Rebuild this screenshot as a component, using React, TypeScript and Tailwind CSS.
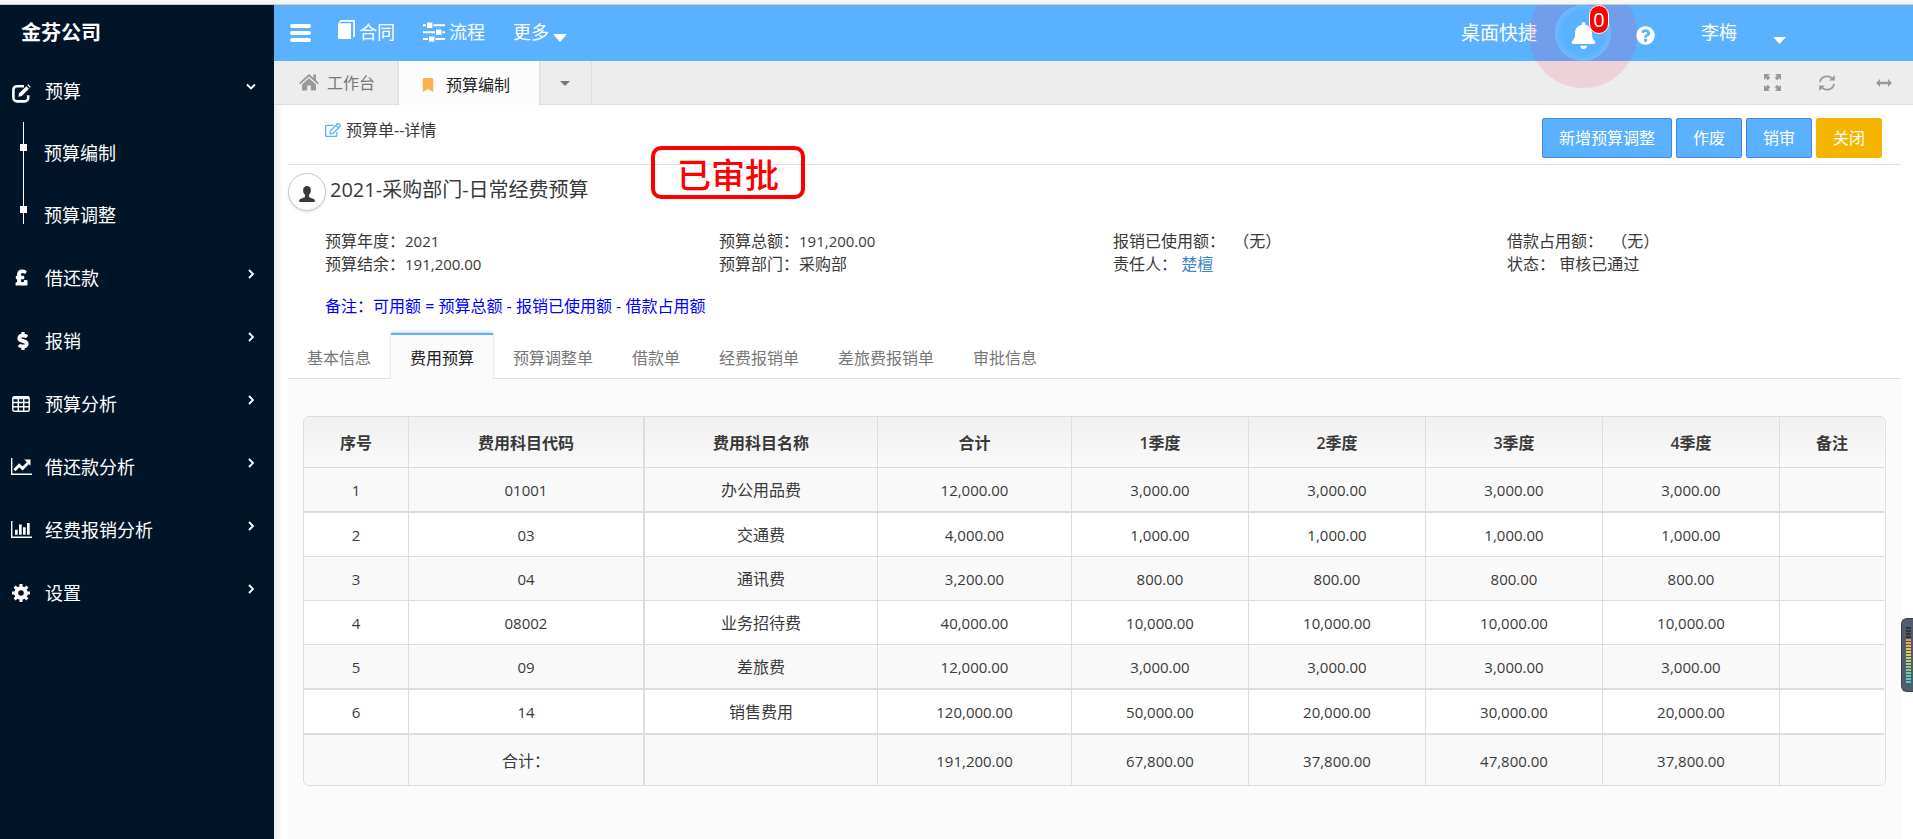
import type { ReactNode } from "react";
import {
  FaBell,
  FaBookmark,
  FaDollarSign,
  FaPoundSign,
  FaQuestionCircle,
  FaRegEdit,
} from "react-icons/fa";

const TableIcon = () => (
  <svg width="18" height="16" viewBox="0 0 18 16" fill="none" stroke="currentColor" strokeWidth="1.4">
    <rect x="0.8" y="0.8" width="16.4" height="14.4" rx="1.5" />
    <path d="M1 2h16" strokeWidth="2.4" />
    <path d="M1 6.5h16M1 10.8h16M6.3 3v12M11.7 3v12" />
  </svg>
);

const LineChartIcon = () => (
  <svg width="21" height="17" viewBox="0 0 21 17" fill="none" stroke="currentColor">
    <path d="M0.7 0v16.3H21" strokeWidth="1.4" />
    <path d="M3.5 12.3l4.7-5 3.3 3.2 5.5-5.6" strokeWidth="2.8" />
    <path d="M13.2 1.4h6.3v6.3z" fill="currentColor" stroke="none" />
  </svg>
);

const BarChartIcon = () => (
  <svg width="21" height="17" viewBox="0 0 21 17" fill="currentColor">
    <path d="M0 0h1.4v15.5H21V17H0z" />
    <path d="M4 8.8h2.7v5H4zM8 3.4h2.7v10.4H8zM12 6.2h2.7v7.6H12zM16 2h2.7v11.8H16z" />
  </svg>
);

const CogIcon = () => (
  <svg width="18" height="18" viewBox="0 0 18 18" fill="none" stroke="currentColor">
    <circle cx="9" cy="9" r="4.8" strokeWidth="4" />
    <path
      d="M9 0v3.5M9 14.5V18M0 9h3.5M14.5 9H18M2.6 2.6l2.5 2.5M12.9 12.9l2.5 2.5M2.6 15.4l2.5-2.5M12.9 5.1l2.5-2.5"
      strokeWidth="3"
    />
  </svg>
);

const EditIcon = () => (
  <svg width="19" height="19" viewBox="0 0 19 19" fill="none" stroke="currentColor">
    <path d="M12 2.2H5A3.6 3.6 0 0 0 1.4 5.8v8A3.6 3.6 0 0 0 5 17.4h7.6a3.6 3.6 0 0 0 3.6-3.6v-2.6" strokeWidth="2.6" />
    <path d="M6.3 12.8l.9-3.5L14.3 2.2l2.6 2.6-7.1 7.1z" fill="currentColor" stroke="none" />
    <path d="M15.3 1.2l2.6 2.6 .9-.9-2.6-2.6z" fill="currentColor" stroke="none" />
  </svg>
);

const BookIcon = () => (
  <svg width="17" height="20" viewBox="0 0 17 20" fill="currentColor">
    <path d="M0 3.2h13V19H1.2A1.2 1.2 0 0 1 0 17.8z" />
    <path d="M0.3 2.4L3 0h14v16.3l-1.8 1.5V1.7H3.2l-.8.7z" />
  </svg>
);

const SlidersIcon = () => (
  <svg width="22" height="20" viewBox="0 0 22 20" fill="currentColor">
    <path d="M0 2.300h3v2H0zM10.400 2.300H22v2H10.400zM0 9.300h12v2H0zM19.400 9.300H22v2h-2.600zM0 16h5v2H0zM12.400 16H22v2h-9.600z" />
    <path d="M4 0.600h5.400v5.400H4zM13 7.600h5.400v5.400H13zM6 14.400h5.400v5.400H6z" />
  </svg>
);

const HomeIcon = () => (
  <svg width="20" height="17" viewBox="0 0 20 17" fill="currentColor">
    <path d="M10 0L0 9l1.3 1.3L10 2.6l8.7 7.7L20 9l-3-2.7V.6h-2.6v3.4z" />
    <path d="M10 4.2l7 6.2V16.5h-5.2v-5H8.2v5H3v-6.1z" />
  </svg>
);

const UserIcon = () => (
  <svg width="16" height="16" viewBox="0 0 16 16" fill="currentColor">
    <path d="M8 0c2.4 0 3.9 1.7 3.9 4.2 0 2-.8 3.7-1.9 4.6v1.5c0 .6.3.9.8 1.1l3.3 1.4c1 .4 1.600 1 1.700 1.900V16H.2v-1.300c.1-.9.7-1.500 1.700-1.900l3.300-1.400c.5-.2.8-.5.8-1.100V8.800C4.900 7.900 4.100 6.200 4.100 4.200 4.100 1.700 5.600 0 8 0z" />
  </svg>
);

const ExpandIcon = () => (
  <svg width="17" height="17" viewBox="0 0 17 17" fill="currentColor">
    <path d="M0 0h6L4.200 1.800l2 2-2.400 2.400-2-2L0 6zM17 0v6l-1.800-1.800-2 2-2.400-2.400 2-2L11 0zM0 17v-6l1.800 1.800 2-2 2.400 2.400-2 2L6 17zM17 17h-6l1.800-1.800-2-2 2.400-2.400 2 2L17 11z" />
  </svg>
);

const RefreshIcon = () => (
  <svg width="16" height="16" viewBox="0 0 16 16" fill="none" stroke="currentColor" strokeWidth="1.8">
    <path d="M1 7.200A7 6.600 0 0 1 13 3.400M15 8.800A7 6.600 0 0 1 3 12.600" />
    <path d="M15.800 0v5.600h-5.600zM.2 16v-5.600h5.600z" fill="currentColor" stroke="none" />
  </svg>
);

const ArrowsIcon = () => (
  <svg width="16" height="8" viewBox="0 0 16 8" fill="currentColor">
    <path d="M0 4l4-4v2.800h8V0l4 4-4 4V5.200H4V8z" />
  </svg>
);

const Caret = ({ className }: { className: string }) => (
  <svg viewBox="0 0 14 7" className={className} fill="currentColor" preserveAspectRatio="none">
    <path d="M0 0h14L7 7z" />
  </svg>
);

const Chevron = ({ open = false }: { open?: boolean }) => (
  <svg
    width="10"
    height="10"
    viewBox="0 0 10 10"
    fill="none"
    stroke="currentColor"
    strokeWidth="1.8"
    className="ml-auto -translate-y-1"
  >
    <path d={open ? "M1 2.500l4 4 4-4" : "M3 1l4 4-4 4"} />
  </svg>
);

const menu: { label: string; icon: ReactNode }[] = [
  { label: "借还款", icon: <FaPoundSign size={17} stroke="currentColor" strokeWidth={40} /> },
  { label: "报销", icon: <FaDollarSign size={18} stroke="currentColor" strokeWidth={30} className="ml-1" /> },
  { label: "预算分析", icon: <TableIcon /> },
  { label: "借还款分析", icon: <LineChartIcon /> },
  { label: "经费报销分析", icon: <BarChartIcon /> },
  { label: "设置", icon: <CogIcon /> },
];

const tabs = ["基本信息", "费用预算", "预算调整单", "借款单", "经费报销单", "差旅费报销单", "审批信息"];

const columns = [
  { title: "序号", width: "w-[104px]" },
  { title: "费用科目代码", width: "w-[235px]" },
  { title: "费用科目名称", width: "w-[234px]" },
  { title: "合计", width: "w-[194px]" },
  { title: "1季度", width: "w-[177px]" },
  { title: "2季度", width: "w-[177px]" },
  { title: "3季度", width: "w-[177px]" },
  { title: "4季度", width: "w-[177px]" },
  { title: "备注", width: "w-[105px]" },
];

const rows = [
  ["1", "01001", "办公用品费", "12,000.00", "3,000.00", "3,000.00", "3,000.00", "3,000.00", ""],
  ["2", "03", "交通费", "4,000.00", "1,000.00", "1,000.00", "1,000.00", "1,000.00", ""],
  ["3", "04", "通讯费", "3,200.00", "800.00", "800.00", "800.00", "800.00", ""],
  ["4", "08002", "业务招待费", "40,000.00", "10,000.00", "10,000.00", "10,000.00", "10,000.00", ""],
  ["5", "09", "差旅费", "12,000.00", "3,000.00", "3,000.00", "3,000.00", "3,000.00", ""],
  ["6", "14", "销售费用", "120,000.00", "50,000.00", "20,000.00", "30,000.00", "20,000.00", ""],
];

const total = ["", "合计：", "", "191,200.00", "67,800.00", "37,800.00", "47,800.00", "37,800.00", ""];

// rows closed by a heavier rule
const thickRows = [0, 4, 5];

const meterColors = [
  "bg-[#2f3440]", "bg-[#2f3440]", "bg-[#2f3440]", "bg-[#2f3440]",
  "bg-[#e8955a]", "bg-[#e8a555]", "bg-[#e6b554]", "bg-[#e0c455]", "bg-[#dcd058]",
  "bg-[#ccd45c]", "bg-[#b8d565]", "bg-[#a6d66e]", "bg-[#93d67a]", "bg-[#82d588]",
  "bg-[#72d496]", "bg-[#64d3a5]", "bg-[#58d2b2]", "bg-[#4fd0c0]", "bg-[#46cfca]",
];

const Sidebar = () => (
  <aside className="w-[274px] shrink-0 bg-[#001528] text-lg leading-6 text-white">
    <div className="flex h-[55px] items-center pl-[21px] text-xl font-bold">金芬公司</div>
    <nav>
      <button type="button" className="flex h-[62px] w-full items-center pr-[18px] pl-3">
        <span className="flex w-[33px] pt-1">
          <EditIcon />
        </span>
        预算
        <Chevron open />
      </button>
      <ul className="relative">
        <li className="absolute top-0 left-[23px] h-[102px] w-px bg-white" aria-hidden="true" />
        {["预算编制", "预算调整"].map((label) => (
          <li key={label} className="flex h-[62px] items-center pl-5">
            <span className="mb-3 size-[7px] bg-white" />
            <a href="#" className="pl-[17px]">
              {label}
            </a>
          </li>
        ))}
      </ul>
      {menu.map((item) => (
        <button key={item.label} type="button" className="flex h-[63px] w-full items-center pr-[18px] pl-[10px]">
          <span className="mr-[13px] flex w-[22px] justify-center">{item.icon}</span>
          {item.label}
          <Chevron />
        </button>
      ))}
    </nav>
  </aside>
);

const Header = () => (
  <header className="relative z-10 flex h-14 items-center bg-[#5ab1ff] pr-[127px] pl-4 text-lg leading-6 text-white">
    <button type="button" aria-label="菜单" className="flex w-[21px] flex-col gap-[3px]">
      <span className="h-1 rounded-sm bg-white" />
      <span className="h-1 rounded-sm bg-white" />
      <span className="h-1 rounded-sm bg-white" />
    </button>
    <a href="#" className="ml-[27px] flex items-center gap-1 pb-0.5">
      <span className="pb-1">
        <BookIcon />
      </span>
      合同
    </a>
    <a href="#" className="ml-7 flex items-center gap-1 pb-0.5">
      <SlidersIcon />
      流程
    </a>
    <button type="button" className="ml-7 flex items-center gap-1 pb-0.5">
      更多
      <Caret className="mt-3 h-2 w-[14px]" />
    </button>

    <a href="#" className="ml-auto text-[19px]">
      桌面快捷
    </a>
    <button type="button" aria-label="通知" className="relative ml-[18px] flex size-14 items-center justify-center">
      <span className="pointer-events-none absolute top-0 -left-[26px] h-[83px] w-[108px] overflow-hidden">
        <span className="-mt-[25px] block size-[108px] rounded-full bg-[#fc286a]/14" />
      </span>
      <span className="absolute inset-0 rounded-full bg-[#5ab1ff] shadow-[inset_0_0_8px_rgba(255,255,255,0.25)]" />
      <FaBell size={27} className="relative mt-1" />
      <span className="absolute top-0 left-[34px] flex h-[29px] w-5 items-center justify-center rounded-[10px] border border-white bg-[#ff0000] text-xl">
        0
      </span>
    </button>
    <a href="#" aria-label="帮助" className="mt-1 ml-[25px]">
      <FaQuestionCircle size={19} />
    </a>
    <button type="button" className="ml-[46px] flex items-center gap-9 pb-0.5">
      李梅
      <Caret className="mt-4 h-[7px] w-[13px]" />
    </button>
  </header>
);

const PageTabs = () => (
  <div className="flex h-11 border-b border-[#dedede] bg-[#ededed] text-base leading-6 text-[#777]">
    <button type="button" className="flex w-[125px] items-center gap-2 pl-[25px]">
      <span className="text-[#999]">
        <HomeIcon />
      </span>
      工作台
    </button>
    <button
      type="button"
      className="-mb-px flex w-[140px] items-center bg-[#fcfcfc] pt-1 pl-[23px] text-[#222] shadow-[0_0_3px_rgba(0,0,0,0.15)]"
    >
      <FaBookmark className="mr-3 h-[14px] w-3 text-[#fbb055]" />
      预算编制
    </button>
    <button type="button" aria-label="更多标签" className="flex w-[53px] items-center justify-center border-r border-[#dedede] pt-0.5">
      <Caret className="h-[5px] w-[10px]" />
    </button>
    <div className="ml-auto flex items-center pr-[21px] text-[#999]">
      <button type="button" aria-label="全屏">
        <ExpandIcon />
      </button>
      <button type="button" aria-label="刷新" className="ml-[38px]">
        <RefreshIcon />
      </button>
      <button type="button" aria-label="展开" className="ml-[41px]">
        <ArrowsIcon />
      </button>
    </div>
  </div>
);

const Num = ({ children }: { children: ReactNode }) => <span className="text-[15px]">{children}</span>;

const Detail = () => (
  <section className="relative">
    <div className="flex h-[60px] items-start border-b border-[#e0e0e0] pr-[19px] pl-[37px]">
      <h1 className="mt-[13px] flex items-center gap-[5px]">
        <FaRegEdit size={16} className="text-[#5ab1ff]" />
        预算单--详情
      </h1>
      <div className="mt-[13px] ml-auto flex gap-1 text-white">
        {["新增预算调整", "作废", "销审"].map((label) => (
          <button key={label} type="button" className="h-10 rounded-xs border border-[#3f86f0] bg-[#5ab1ff] px-4">
            {label}
          </button>
        ))}
        <button type="button" className="h-10 rounded-xs border border-[#f5b400] bg-[#f5b400] px-4">
          关闭
        </button>
      </div>
    </div>

    <div className="absolute top-[41px] left-[363px] flex h-[53px] w-[154px] items-center justify-center rounded-[10px] border-4 border-[#ff0000] pt-1 text-[34px] leading-10 font-medium text-[#ff0000]">
      已审批
    </div>

    <div className="flex items-center gap-1 pt-2">
      <span className="flex size-[38px] items-center justify-center rounded-full border border-[#ccc] bg-white pt-1 shadow-sm">
        <UserIcon />
      </span>
      <h2 className="pb-1 text-xl leading-7">2021-采购部门-日常经费预算</h2>
    </div>

    <div className="mt-[19px] grid grid-cols-4 pl-[37px] leading-[23px]">
      <div>预算年度：<Num>2021</Num></div>
      <div>预算总额：<Num>191,200.00</Num></div>
      <div>报销已使用额：&nbsp;&nbsp;（无）</div>
      <div>借款占用额：&nbsp;&nbsp;（无）</div>
      <div>预算结余：<Num>191,200.00</Num></div>
      <div>预算部门：采购部</div>
      <div>
        责任人： <a href="#" className="text-[#3a87c8]">楚檀</a>
      </div>
      <div>状态： 审核已通过</div>
    </div>
    <p className="mt-[18px] pl-[37px] text-[#0000ff]">
      备注：可用额 = 预算总额 - 报销已使用额 - 借款占用额
    </p>
  </section>
);

const cellBorder = (i: number) =>
  i === 0 ? "" : i === 2 ? "border-l-2 border-[#ddd]" : "border-l border-[#ddd]";

const BudgetTable = () => (
  <div className="overflow-hidden rounded-md border border-[#ddd] pr-px">
    <table className="w-full table-fixed border-separate border-spacing-0 text-center">
      <thead>
        <tr className="bg-linear-to-b from-[#f0f0f0] to-[#fafafa]">
          {columns.map((col, i) => (
            <th key={col.title} className={`h-[51px] border-b border-b-[#ddd] pt-0.5 font-semibold ${col.width} ${cellBorder(i)}`}>
              {col.title}
            </th>
          ))}
        </tr>
      </thead>
      <tbody>
        {rows.map((row, r) => (
          <tr key={row[0]} className="odd:bg-[#f9f9f9] even:bg-white">
            {row.map((cell, i) => (
              <td
                key={i}
                className={`${thickRows.includes(r) ? "h-[45px] border-b-2" : "h-11 border-b"} border-b-[#ddd] ${
                  i === 2 ? "" : "text-[15px]"
                } ${cellBorder(i)}`}
              >
                {cell}
              </td>
            ))}
          </tr>
        ))}
      </tbody>
      <tfoot>
        <tr className="bg-[#f9f9f9]">
          {total.map((cell, i) => (
            <td key={i} className={`h-[50px] pt-0.5 ${i > 2 ? "text-[15px]" : ""} ${cellBorder(i)}`}>
              {cell}
            </td>
          ))}
        </tr>
      </tfoot>
    </table>
  </div>
);

const App = () => {
  return (
    <div className="flex min-h-screen flex-col overflow-x-hidden bg-white font-['Open_Sans','Noto_Sans_CJK_SC',sans-serif] text-base leading-6 text-[#393939]">
      <div className="h-[5px] border-b border-[#ccc] bg-[#f6f6f6]" />
      <div className="flex flex-1">
        <Sidebar />
        <div className="flex min-w-0 flex-1 flex-col">
          <Header />
          <PageTabs />
          <main className="flex flex-1 flex-col bg-linear-to-r from-[#eee] to-white to-[10px] pr-3 pl-[14px]">
            <Detail />
            <div role="tablist" className="mt-[15px] flex h-[46px] border-b border-[#e0e0e0] text-[#777]">
              {tabs.map((tab) => (
                <button
                  key={tab}
                  type="button"
                  role="tab"
                  aria-selected={tab === "费用预算"}
                  className="mr-px border-t-2 border-transparent px-[19px] pt-0.5 aria-selected:-mb-px aria-selected:border-[#5ab1ff] aria-selected:bg-[#fbfbfb] aria-selected:text-[#222] aria-selected:shadow-[0_-1px_3px_rgba(0,0,0,0.2)]"
                >
                  {tab}
                </button>
              ))}
            </div>
            <div className="flex-1 bg-[#fbfbfb] px-[15px] pt-[37px] pb-12">
              <BudgetTable />
            </div>
          </main>
        </div>
      </div>

      {/* level meter docked to the window edge */}
      <div className="fixed top-[618px] right-0 flex h-[74px] w-3 flex-col gap-px rounded-l-md border border-r-0 border-[#3c4150] bg-[#565b6b] py-2 pl-1">
        {meterColors.map((color, i) => (
          <span key={i} className={`h-[2px] w-[5px] shrink-0 ${color}`} />
        ))}
      </div>
    </div>
  );
};

export default App;
